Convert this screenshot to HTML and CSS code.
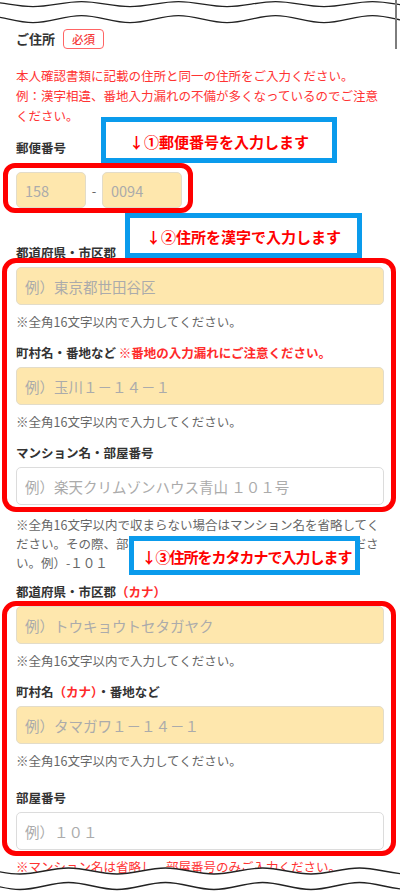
FILE: index.html
```html
<!DOCTYPE html>
<html lang="ja">
<head>
<meta charset="utf-8">
<title>ご住所</title>
<link rel="stylesheet" href="styles.css">
</head>
<body>
<div class="page">
  <section class="form">
    <div class="heading">
      <h2 class="heading-title">ご住所</h2>
      <span class="badge">必須</span>
    </div>
    <p class="alert">本人確認書類に記載の住所と同一の住所をご入力ください。<br>例：漢字相違、番地入力漏れの不備が多くなっているのでご注意ください。</p>

    <div class="field field-postal">
      <label class="label">郵便番号</label>
      <div class="postal-row">
        <input class="input input-yellow postal-first" type="text" placeholder="158">
        <span class="dash">-</span>
        <input class="input input-yellow postal-second" type="text" placeholder="0094">
      </div>
    </div>

    <div class="field field-pref">
      <label class="label">都道府県・市区郡</label>
      <input class="input input-yellow" type="text" placeholder="例）東京都世田谷区">
      <p class="note">※全角16文字以内で入力してください。</p>
    </div>

    <div class="field field-town">
      <label class="label">町村名・番地など <span class="label-warn">※番地の入力漏れにご注意ください。</span></label>
      <input class="input input-yellow" type="text" placeholder="例）玉川１－１４－１">
      <p class="note">※全角16文字以内で入力してください。</p>
    </div>

    <div class="field field-building">
      <label class="label">マンション名・部屋番号</label>
      <input class="input input-white" type="text" placeholder="例）楽天クリムゾンハウス青山 １０１号">
      <p class="note note-long">※全角16文字以内で収まらない場合はマンション名を省略してください。その際、部屋番号のみ半角ハイフン付きでご入力ください。例）-１０１</p>
    </div>

    <div class="field field-pref-kana">
      <label class="label">都道府県・市区郡<span class="label-red">（カナ）</span></label>
      <input class="input input-yellow" type="text" placeholder="例）トウキョウトセタガヤク">
      <p class="note">※全角16文字以内で入力してください。</p>
    </div>

    <div class="field field-town-kana">
      <label class="label">町村名<span class="label-red">（カナ）</span>・番地など</label>
      <input class="input input-yellow" type="text" placeholder="例）タマガワ１－１４－１">
      <p class="note">※全角16文字以内で入力してください。</p>
    </div>

    <div class="field field-room">
      <label class="label">部屋番号</label>
      <input class="input input-white" type="text" placeholder="例）１０１">
      <p class="note note-red">※マンション名は省略し、部屋番号のみご入力ください。</p>
    </div>
  </section>

  <div class="frame frame-postal"></div>
  <div class="frame frame-kanji"></div>
  <div class="frame frame-kana"></div>

  <div class="callout callout-1">↓①郵便番号を入力します</div>
  <div class="callout callout-2">↓②住所を漢字で入力します</div>
  <div class="callout callout-3">↓③住所をカタカナで入力します</div>

  <svg class="wave wave-top" viewBox="0 0 400 30" width="400" height="30" aria-hidden="true">
    <path class="wave-fill" d="M-64,22.7 C-46.3,22.7 -33.2,15.7 -15.5,15.7 S15.3,22.7 33,22.7 S63.8,15.7 81.5,15.7 S112.3,22.7 130,22.7 S160.8,15.7 178.5,15.7 S209.3,22.7 227,22.7 S257.8,15.7 275.5,15.7 S306.3,22.7 324,22.7 S354.8,15.7 372.5,15.7 S403.3,22.7 421,22.7 L421,0 L-64,0 Z"/>
    <path class="wave-line" d="M-64,6.7 C-46.3,6.7 -33.2,1.7 -15.5,1.7 S15.3,6.7 33,6.7 S63.8,1.7 81.5,1.7 S112.3,6.7 130,6.7 S160.8,1.7 178.5,1.7 S209.3,6.7 227,6.7 S257.8,1.7 275.5,1.7 S306.3,6.7 324,6.7 S354.8,1.7 372.5,1.7 S403.3,6.7 421,6.7"/>
    <path class="wave-line" d="M-64,22.7 C-46.3,22.7 -33.2,15.7 -15.5,15.7 S15.3,22.7 33,22.7 S63.8,15.7 81.5,15.7 S112.3,22.7 130,22.7 S160.8,15.7 178.5,15.7 S209.3,22.7 227,22.7 S257.8,15.7 275.5,15.7 S306.3,22.7 324,22.7 S354.8,15.7 372.5,15.7 S403.3,22.7 421,22.7"/>
  </svg>

  <svg class="wave wave-bottom" viewBox="0 860 400 32" width="400" height="32" aria-hidden="true">
    <path class="wave-fill" d="M-77,874 C-59.3,874 -46.2,868 -28.5,868 S2.3,874 20,874 S50.8,868 68.5,868 S99.3,874 117,874 S147.8,868 165.5,868 S196.3,874 214,874 S244.8,868 262.5,868 S293.3,874 311,874 S341.8,868 359.5,868 S390.3,874 408,874 S438.8,868 456.5,868 L456.5,892 L-77,892 Z"/>
    <path class="wave-line" d="M-77,874 C-59.3,874 -46.2,868 -28.5,868 S2.3,874 20,874 S50.8,868 68.5,868 S99.3,874 117,874 S147.8,868 165.5,868 S196.3,874 214,874 S244.8,868 262.5,868 S293.3,874 311,874 S341.8,868 359.5,868 S390.3,874 408,874 S438.8,868 456.5,868"/>
    <path class="wave-line" d="M-77,889.5 C-59.3,889.5 -46.2,882.5 -28.5,882.5 S2.3,889.5 20,889.5 S50.8,882.5 68.5,882.5 S99.3,889.5 117,889.5 S147.8,882.5 165.5,882.5 S196.3,889.5 214,889.5 S244.8,882.5 262.5,882.5 S293.3,889.5 311,889.5 S341.8,882.5 359.5,882.5 S390.3,889.5 408,889.5 S438.8,882.5 456.5,882.5"/>
  </svg>

  <div class="scrollbar"></div>
</div>
</body>
</html>
```

FILE: styles.css
```css
* {
  box-sizing: border-box;
}

html,
body {
  margin: 0;
  padding: 0;
  background: #ffffff;
  overflow: hidden;
}

body {
  font-family: "Noto Sans CJK JP", "Noto Sans", sans-serif;
  color: #333333;
}

.page {
  position: relative;
  width: 400px;
  height: 892px;
  overflow: hidden;
  background: #ffffff;
}

.form {
  display: flex;
  flex-direction: column;
  padding: 29px 16px 0;
}

.heading {
  display: flex;
  align-items: center;
  height: 20px;
}

.heading-title {
  margin: 0;
  font-size: 13px;
  line-height: 20px;
  font-weight: 700;
  color: #333333;
}

.badge {
  display: flex;
  align-items: center;
  justify-content: center;
  height: 20px;
  margin-left: 8px;
  padding: 0 8px;
  border: 1px solid #ff6464;
  border-radius: 4px;
  font-size: 11.5px;
  line-height: 18px;
  font-weight: 500;
  color: #f53a3a;
}

.alert {
  margin: 17px 0 0;
  font-size: 12.5px;
  line-height: 20px;
  color: #ff3333;
}

.field {
  display: flex;
  flex-direction: column;
}

.field-postal { margin-top: 12px; }
.field-pref { margin-top: 35px; }
.field-town { margin-top: 11px; }
.field-building { margin-top: 11px; }
.field-pref-kana { margin-top: 10px; }
.field-town-kana { margin-top: 11px; }
.field-room { margin-top: 17px; }

.label {
  display: block;
  margin-bottom: 4px;
  font-size: 12.5px;
  line-height: 20px;
  font-weight: 700;
  color: #333333;
  white-space: nowrap;
}

.label-warn,
.label-red {
  color: #ff2b2b;
}

.postal-row {
  display: flex;
  align-items: center;
  margin-top: 10px;
}

.input {
  display: block;
  width: 100%;
  height: 38px;
  margin: 0;
  padding: 0 8px;
  border: 1px solid #dcdcdc;
  border-radius: 5px;
  font-family: "Noto Sans CJK JP", "Noto Sans", sans-serif;
  font-size: 14.5px;
  color: #333333;
  outline: none;
}

.input::placeholder {
  color: #ababab;
  opacity: 1;
}

.input-yellow {
  background: #fee7ad;
  border-color: #e3dcc8;
}

.input-white {
  background: #ffffff;
}

.postal-first {
  width: 70px;
  height: 36px;
}

.postal-second {
  width: 80px;
  height: 36px;
}

.dash {
  width: 16px;
  text-align: center;
  font-size: 13px;
  color: #666666;
}

.note {
  margin: 7px 0 0;
  font-size: 12.5px;
  line-height: 20px;
  color: #666666;
}

.note-long {
  margin-top: 10px;
  line-height: 19px;
}

.note-red {
  color: #ff3333;
}

/* annotation overlays */
.frame {
  position: absolute;
  border: 5px solid #ff0000;
}

.frame-postal {
  left: 3px;
  top: 163px;
  width: 190px;
  height: 50px;
  border-radius: 12px;
}

.frame-kanji {
  left: 2px;
  top: 258px;
  width: 394px;
  height: 254px;
  border-radius: 14px;
}

.frame-kana {
  left: 2px;
  top: 601px;
  width: 394px;
  height: 255px;
  border-radius: 14px;
}

.callout {
  position: absolute;
  display: flex;
  align-items: center;
  justify-content: center;
  padding-top: 3px;
  border: 5px solid #0a9bec;
  background: #ffffff;
  font-size: 15px;
  line-height: 20px;
  font-weight: 700;
  color: #ff0000;
  white-space: nowrap;
}

.callout-1 {
  left: 101px;
  top: 117px;
  width: 236px;
  height: 46px;
}

.callout-2 {
  left: 125px;
  top: 213px;
  width: 237px;
  height: 45px;
}

.callout-3 {
  left: 129px;
  top: 536px;
  width: 231px;
  height: 39px;
  letter-spacing: -1px;
  padding-left: 4px;
}

.wave {
  position: absolute;
  left: 0;
  display: block;
}

.wave-top {
  top: 0;
}

.wave-bottom {
  top: 860px;
}

.wave-fill {
  fill: #ffffff;
  stroke: none;
}

.wave-line {
  fill: none;
  stroke: #222222;
  stroke-width: 1.3;
}

.scrollbar {
  position: absolute;
  top: 0;
  left: 395px;
  width: 2px;
  height: 49px;
  background: #7d7d7d;
}
```
